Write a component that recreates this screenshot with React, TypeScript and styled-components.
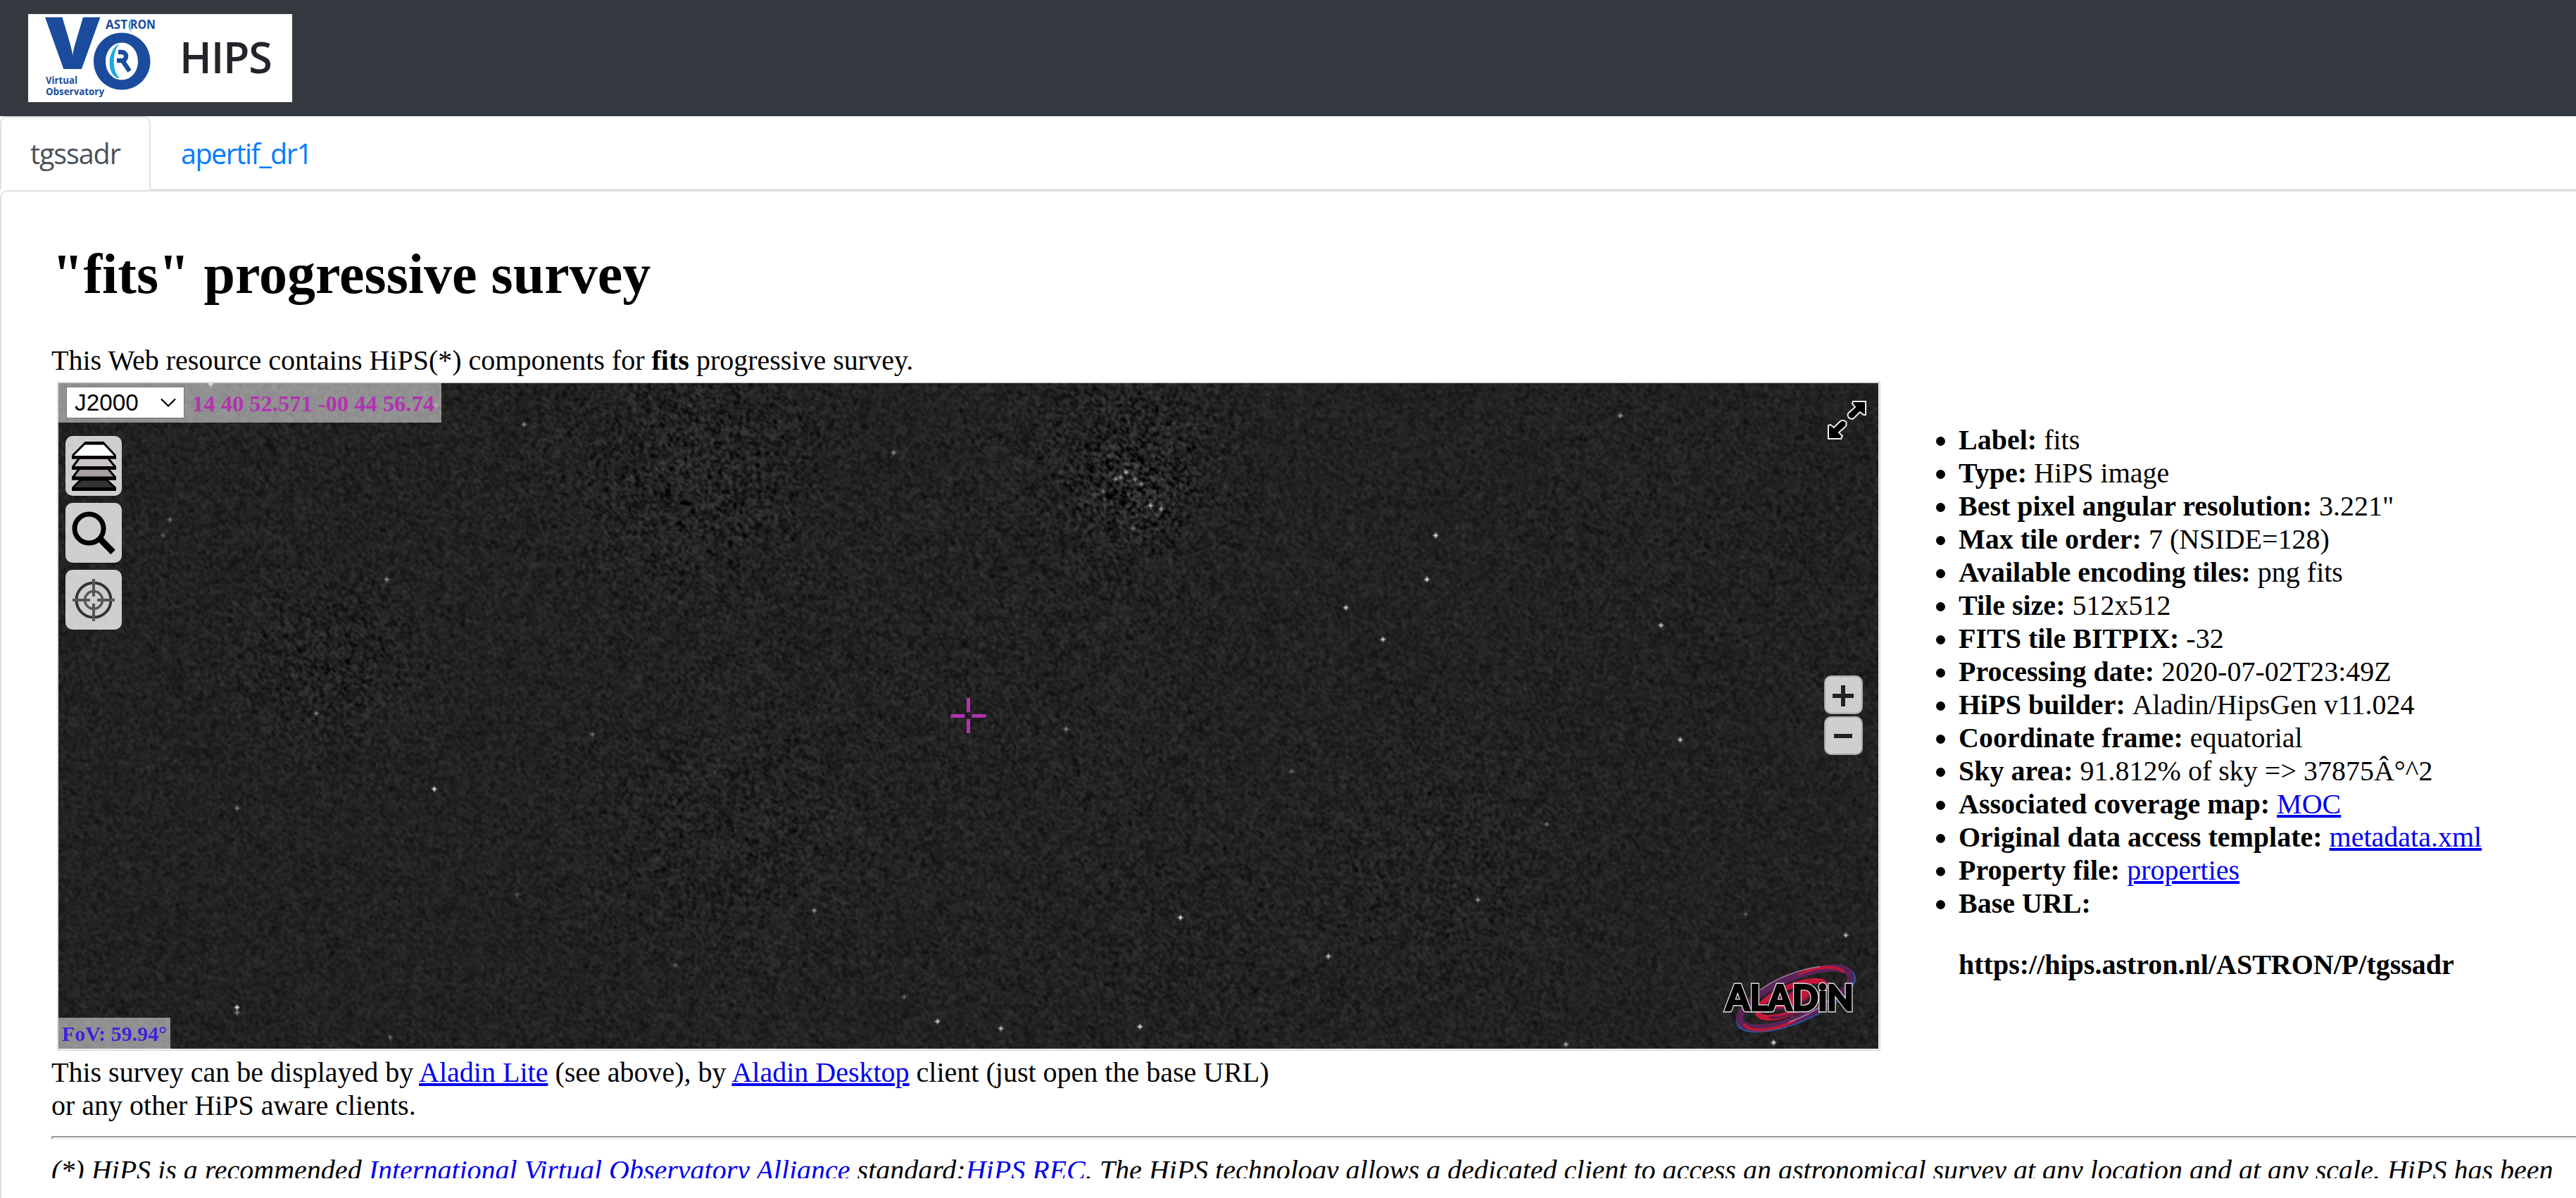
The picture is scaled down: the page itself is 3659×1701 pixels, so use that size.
import React, { useLayoutEffect, useRef } from 'react';
import styled, { createGlobalStyle } from 'styled-components';

const GlobalStyle = createGlobalStyle`
  html, body { margin: 0; padding: 0; background: #fff; overflow: hidden; }
  * { box-sizing: border-box; }
`;

const serif = "'Liberation Serif', 'Times New Roman', serif";
const sans = "'Open Sans', 'Noto Sans', sans-serif";

const Page = styled.div`
  height: 1701px;
  display: flex;
  flex-direction: column;
  overflow: hidden;
`;

const Navbar = styled.header`
  flex: none;
  height: 165px;
  padding: 20px 40px;
  background: #343a40;
  display: flex;
`;

const Brand = styled.div`
  width: 375px;
  height: 125px;
  background: #fff;
  display: flex;
  align-items: center;
`;

const BrandName = styled.span`
  margin-left: 10px;
  font: 600 61px/121px ${sans};
  height: 125px;
  letter-spacing: -1.2px;
  color: #212529;
`;

const Tabs = styled.nav`
  flex: none;
  height: 105px;
  display: flex;
  border-bottom: 2px solid #dee2e6;
`;

const Tab = styled.a<{ $active?: boolean }>`
  height: ${p => (p.$active ? 105 : 103)}px;
  width: ${p => (p.$active ? 214 : 260)}px;
  padding-left: ${p => (p.$active ? 41 : 41)}px;
  border: 2px solid transparent;
  border-color: ${p => (p.$active ? '#dee2e6 #dee2e6 #fff' : 'transparent')};
  border-radius: 10px 10px 0 0;
  background: #fff;
  color: ${p => (p.$active ? '#495057' : '#007bff')};
  font: 400 39.5px/103px ${sans};
  letter-spacing: ${p => (p.$active ? -1.1 : -1.5)}px;
  white-space: nowrap;
`;

const Card = styled.main`
  flex: 1;
  width: 3700px;
  border: 2px solid #dfdfdf;
  border-bottom: 0;
  border-radius: 10px 10px 0 0;
`;

const Frame = styled.div`
  width: 3657px;
  height: 1401px;
  padding: 71px 0 0 71px;
  overflow: hidden;
  font: 40px/47px ${serif};
  color: #000;
`;

const Title = styled.h1`
  margin: 0 0 53px;
  padding-left: 1px;
  font: 700 80px/92px ${serif};
`;

const Line = styled.p`
  margin: 0;
  white-space: nowrap;
`;

const Columns = styled.div`
  display: flex;
  margin: 7px 0 7px 8px;
  height: 950px;
`;

const Viewer = styled.section`
  position: relative;
  flex: none;
  width: 2590px;
  height: 950px;
  border: 2px solid #ddd;
`;

const Sky = styled.canvas`
  display: block;
  width: 2585px;
  height: 945px;
`;

const Location = styled.div`
  position: absolute;
  left: 0;
  top: 0;
  width: 544px;
  height: 56px;
  padding: 5px 0 0 11px;
  display: flex;
  background: rgba(255, 255, 255, 0.5);
`;

const Select = styled.div`
  width: 168px;
  height: 45px;
  padding: 0 11px;
  border: 1px solid #767676;
  background: #fff;
  display: flex;
  align-items: center;
  justify-content: space-between;
  font: 33.3px/43px 'Liberation Sans', Arial, sans-serif;
`;

const Coordinates = styled.span`
  margin-left: 11px;
  font: 700 32.5px/48px ${serif};
  color: #b232b2;
  white-space: nowrap;
`;

const ToolBar = styled.div`
  position: absolute;
  left: 10px;
  top: 75px;
  display: flex;
  flex-direction: column;
  gap: 10px;
`;

const Tool = styled.div`
  width: 80px;
  height: 85px;
  border-radius: 10px;
  background: rgba(250, 250, 250, 0.8);
`;

const ZoomBar = styled.div`
  position: absolute;
  left: 2508px;
  top: 415px;
  display: flex;
  flex-direction: column;
  gap: 3px;
`;

const ZoomButton = styled.div`
  width: 55px;
  height: 55px;
  border: 2px solid #a6a6a6;
  border-radius: 10px;
  background: rgba(250, 250, 250, 0.8);
`;

const Overlay = styled.svg<{ $x: number; $y: number }>`
  position: absolute;
  left: ${p => p.$x}px;
  top: ${p => p.$y}px;
`;

const Fov = styled.div`
  position: absolute;
  left: 0;
  top: 901px;
  width: 159px;
  height: 44px;
  padding-left: 5px;
  background: rgba(255, 255, 255, 0.5);
  font: 700 30px/45px ${serif};
  color: #3c22dc;
  white-space: nowrap;
`;

const Info = styled.div`
  padding: 59px 0 0 111px;
  white-space: nowrap;
`;

const Properties = styled.ul`
  margin: 0 0 40px;
  padding: 0;
  list-style: none;
`;

const Property = styled.li`
  display: flex;
  align-items: center;
  height: 47px;
  margin-left: -32px;
  white-space: pre;
  &::before {
    content: '';
    width: 13px;
    height: 13px;
    margin: 3px 19px 0 0;
    border-radius: 50%;
    background: #000;
  }
`;

const Link = styled.a<{ $plain?: boolean }>`
  color: #0000ee;
  text-decoration: ${p => (p.$plain ? 'none' : 'underline')};
  text-decoration-thickness: 3.500px;
`;

const Rule = styled.hr`
  width: 3700px;
  height: 5px;
  margin: 20px 0 20px;
  border: 2px solid;
  border-color: #9a9a9a #eee #eee #9a9a9a;
`;

const Note = styled(Line)`
  font-style: italic;
`;

const SKY_W = 1034;
const SKY_H = 378;

// [x, y, radius, strength] of the noisy patches, in sky pixels
const patches = [
  [612, 58, 24, 2.6], [606, 35, 55, 1.5], [368, 55, 55, 1.3], [155, 160, 45, 1.1],
  [380, 255, 80, 0.7], [790, 270, 70, 0.6], [560, 160, 130, 0.35], [330, 20, 100, 0.5],
  [650, 330, 90, 0.3], [130, 60, 110, 0.15], [920, 90, 120, 0.2],
];

// [x, y, brightness]
const stars = [
  [782, 86, 1], [777, 111, 1], [731, 127, 0.95], [752, 145, 0.9], [910, 137, 0.85], [887, 18, 0.6],
  [921, 202, 0.85], [213, 230, 1], [186, 111, 0.6], [637, 303, 1], [721, 325, 0.85], [499, 362, 0.9],
  [614, 365, 1], [535, 366, 0.8], [101, 354, 1], [101, 357, 0.5], [1015, 313, 0.8], [429, 299, 0.6],
  [572, 196, 0.5], [146, 187, 0.5], [101, 241, 0.45], [264, 23, 0.5], [303, 199, 0.4], [806, 293, 0.6],
  [188, 371, 0.4], [86, 0, 0.9], [474, 39, 0.5], [620, 69, 0.8], [626, 71, 0.6], [606, 50, 0.7],
  [63, 77, 0.4], [59, 86, 0.3], [214, 12, 0.4], [958, 301, 0.3], [985, 360, 0.4], [974, 374, 1],
  [856, 375, 0.7], [480, 348, 0.4], [700, 220, 0.35], [845, 250, 0.4], [350, 330, 0.3], [260, 290, 0.3],
  [600, 54, 0.55], [603, 53, 0.55], [611, 54, 0.55], [615, 57, 0.5], [610, 82, 0.4], [593, 61, 0.4],
];

function paintSky(canvas: HTMLCanvasElement) {
  const ctx = canvas.getContext('2d');
  if (!ctx) return;
  const image = ctx.createImageData(SKY_W, SKY_H);
  let seed = 20200702;
  const random = () => {
    seed = (Math.imul(seed, 1664525) + 1013904223) >>> 0;
    return seed / 4294967296;
  };
  const gauss = () => random() + random() + random() + random() - 2;
  const stride = SKY_W + 2;
  const field = new Float32Array(stride * (SKY_H + 2));
  for (let i = 0; i < field.length; i++) field[i] = gauss();
  for (let y = 0; y < SKY_H; y++) {
    for (let x = 0; x < SKY_W; x++) {
      let level = 1;
      for (const [px, py, r, s] of patches) {
        const d = ((x - px) ** 2 + (y - py) ** 2) / (r * r);
        level += s * Math.exp(-d);
      }
      const k = y * stride + x;
      const n = field[k] * 0.8 + (field[k + 1] + field[k + stride]) * 0.35 + field[k + stride + 1] * 0.45;
      let v = 34 + n * 9.5 * level;
      if (v > 46) v = 46 + (v - 46) * 0.75;
      const i = (y * SKY_W + x) * 4;
      image.data[i] = image.data[i + 1] = image.data[i + 2] = Math.max(0, v);
      image.data[i + 3] = 255;
    }
  }
  ctx.putImageData(image, 0, 0);
  for (const [x, y, b] of stars) {
    ctx.fillStyle = `rgba(255,255,255,${b})`;
    ctx.fillRect(x, y, 1, 1);
    ctx.fillStyle = `rgba(255,255,255,${b * 0.6})`;
    ctx.fillRect(x - 1, y, 1, 1);
    ctx.fillRect(x + 1, y, 1, 1);
    ctx.fillRect(x, y - 1, 1, 1);
    ctx.fillRect(x, y + 1, 1, 1);
  }
}

function SkyView() {
  const ref = useRef<HTMLCanvasElement>(null);
  useLayoutEffect(() => {
    if (ref.current) paintSky(ref.current);
  }, []);
  return <Sky ref={ref} width={SKY_W} height={SKY_H} />;
}

const VoLogo = () => (
  <svg width="205" height="125" viewBox="40 20 205 125" fill="#1a4b9c" fontFamily="'Open Sans', sans-serif" fontWeight="700">
    <text transform="translate(64 98) scale(1.17 1)" fontSize="102" fontWeight="800" textLength="67" lengthAdjust="spacingAndGlyphs">V</text>
    <path fillRule="evenodd" d="M173 46.500C195 46.500 213.500 64 213.500 87S195 127.500 173 127.500S133 110 133 87S151 46.500 173 46.500ZM173 60.500C160 60.500 150 72 150 87S160 113.500 173 113.500S196 102 196 87S186 60.500 173 60.500Z" />
    <path d="M170 62C153 69 150 104 167 111L170 111C159 101 159 73 170 62Z" fill="#1fa7e4" />
    <path d="M168 74H173C181 74 181 86 173 86H166M174 86L184 101" fill="none" stroke="#1a4b9c" strokeWidth="6.500" />
    <text x="150" y="41" fontSize="18.500" textLength="31" lengthAdjust="spacingAndGlyphs">AST</text>
    <path d="M187.500 26C181 31 181 41 187 45C184.500 39 184.500 32 187.500 26Z" fill="#1fa7e4" />
    <text x="185" y="41" fontSize="18.500" textLength="36" lengthAdjust="spacingAndGlyphs">RON</text>
    <text x="65" y="118.500" fontSize="14.500" textLength="45" lengthAdjust="spacingAndGlyphs">Virtual</text>
    <text x="65" y="135" fontSize="14.500" textLength="83" lengthAdjust="spacingAndGlyphs">Observatory</text>
  </svg>
);

const LayersIcon = () => (
  <svg width="80" height="85" viewBox="0 0 80 85" stroke="#000" strokeWidth="3">
    <path d="M22 62H58L70 73V76H11V73Z" fill="#333" />
    <path d="M9 75.500H72" strokeWidth="5" />
    <path d="M20 46H60L70 58V61H11V58Z" fill="#a6a0a0" />
    <path d="M9 60H72" strokeWidth="5" />
    <path d="M20 31H60L70 43V46H11V43Z" fill="#cbc5c5" />
    <path d="M9 45.500H72" strokeWidth="5" />
    <path d="M28 10H54L70 27V30H11V27Z" fill="#fff" />
    <path d="M27 10.200H55M9 30.500H72" strokeWidth="4.500" />
  </svg>
);

const SearchIcon = () => (
  <svg width="80" height="85" viewBox="0 0 80 85" fill="none" stroke="#000">
    <circle cx="33.500" cy="36.500" r="20.500" strokeWidth="7" />
    <path d="M49 51L67.500 70" strokeWidth="9" />
  </svg>
);

const TargetIcon = () => (
  <svg width="80" height="85" viewBox="0 0 80 85" fill="none" stroke="#333">
    <circle cx="40" cy="43" r="24.500" strokeWidth="4" />
    <circle cx="40" cy="43" r="12.500" strokeWidth="3.500" stroke="#555" />
    <path d="M40 13V38M40 48V73M10 43H35M45 43H70" strokeWidth="4" stroke="#555" />
  </svg>
);

const AladinLogo = () => (
  <svg width="200" height="105" viewBox="0 0 200 105">
    <g transform="rotate(-23 108 52)" fill="none">
      <ellipse cx="108" cy="54" rx="90" ry="32" stroke="#1b66b0" strokeWidth="2.500" />
      <ellipse cx="108" cy="52" rx="85" ry="29" stroke="#5b2458" strokeWidth="10" />
      <path d="M26 58C31 75 66 84 96 81M126 23C156 22 182 33 186 46" stroke="#c01838" strokeWidth="4" />
      <path d="M66 22C96 16 126 16 158 25" stroke="#a0809c" strokeWidth="1.500" />
      <path d="M86 80C116 82 141 77 156 72" stroke="#a0809c" strokeWidth="1.500" />
      <ellipse cx="103" cy="52" rx="52" ry="18" stroke="#c3183a" strokeWidth="8" />
      <ellipse cx="105" cy="52" rx="30" ry="9" fill="#c3183a" stroke="#701a48" strokeWidth="3" />
      <path d="M63 63C88 76 128 74 148 59" stroke="#701a48" strokeWidth="4" />
    </g>
    <g fontFamily="Lato, 'Open Sans', sans-serif" fontWeight="900" fontSize="52" strokeLinejoin="miter">
      <text x="9" y="70" textLength="182" lengthAdjust="spacingAndGlyphs" fill="#000" stroke="#ddd" strokeWidth="5">ALADiN</text>
      <text x="9" y="70" textLength="182" lengthAdjust="spacingAndGlyphs" fill="#000" stroke="#000" strokeWidth="2.200" aria-hidden="true">ALADiN</text>
    </g>
  </svg>
);

const properties: { label: string; value?: string; link?: boolean }[] = [
  { label: 'Label:', value: 'fits' },
  { label: 'Type:', value: 'HiPS image' },
  { label: 'Best pixel angular resolution:', value: '3.221"' },
  { label: 'Max tile order:', value: '7 (NSIDE=128)' },
  { label: 'Available encoding tiles:', value: 'png fits' },
  { label: 'Tile size:', value: '512x512' },
  { label: 'FITS tile BITPIX:', value: '-32' },
  { label: 'Processing date:', value: '2020-07-02T23:49Z' },
  { label: 'HiPS builder:', value: 'Aladin/HipsGen v11.024' },
  { label: 'Coordinate frame:', value: 'equatorial' },
  { label: 'Sky area:', value: '91.812% of sky => 37875Â°^2' },
  { label: 'Associated coverage map:', value: 'MOC', link: true },
  { label: 'Original data access template:', value: 'metadata.xml', link: true },
  { label: 'Property file:', value: 'properties', link: true },
  { label: 'Base URL:' },
];

export default function App() {
  return (
    <Page>
      <GlobalStyle />
      <Navbar>
        <Brand>
          <VoLogo />
          <BrandName>HIPS</BrandName>
        </Brand>
      </Navbar>
      <Tabs>
        <Tab $active>tgssadr</Tab>
        <Tab>apertif_dr1</Tab>
      </Tabs>
      <Card>
        <Frame>
          <Title>"fits" progressive survey</Title>
          <Line>
            This Web resource contains HiPS(*) components for <b>fits</b> progressive survey.
          </Line>
          <Columns>
            <Viewer>
              <SkyView />
              <Overlay $x={1267} $y={447} width="51" height="51" viewBox="0 0 51 51">
                <path d="M25.500 0V20M25.500 30V50M0.500 25.500H20.500M30.500 25.500H50.500" stroke="#b232b2" strokeWidth="5" />
              </Overlay>
              <Location>
                <Select>
                  J2000
                  <svg width="22" height="14" viewBox="0 0 22 14" fill="none" stroke="#000" strokeWidth="2.200">
                    <path d="M1 1.500L11 11.500L21 1.500" />
                  </svg>
                </Select>
                <Coordinates>14 40 52.571 -00 44 56.74</Coordinates>
              </Location>
              <ToolBar>
                <Tool><LayersIcon /></Tool>
                <Tool><SearchIcon /></Tool>
                <Tool><TargetIcon /></Tool>
              </ToolBar>
              <Overlay $x={2512} $y={24} width="58" height="58" viewBox="0 0 58 58" fill="#000" stroke="#eee" strokeWidth="2">
                <path d="M37 2H55V21L52 21L47 17L38 26Q34 28 31 25Q28 21 31 18L40 10L36 5Z" />
                <path d="M20 55H2V36L5 35L10 39L19 30Q23 27 27 31Q29 35 26 38L17 46L22 51Z" />
              </Overlay>
              <ZoomBar>
                <ZoomButton>
                  <svg width="51" height="51" viewBox="0 0 51 51">
                    <path d="M10 27H40M25 12V42" stroke="#222" strokeWidth="6" />
                  </svg>
                </ZoomButton>
                <ZoomButton>
                  <svg width="51" height="51" viewBox="0 0 51 51">
                    <path d="M12 26H38" stroke="#222" strokeWidth="6" />
                  </svg>
                </ZoomButton>
              </ZoomBar>
              <Overlay as="div" $x={2359} $y={821}>
                <AladinLogo />
              </Overlay>
              <Fov>FoV: 59.94°</Fov>
            </Viewer>
            <Info>
              <Properties>
                {properties.map(p => (
                  <Property key={p.label}>
                    <b>{p.label}{p.value && <>&nbsp;</>}</b>
                    {p.link ? <Link>{p.value}</Link> : p.value && <span>{p.value}</span>}
                  </Property>
                ))}
              </Properties>
              <b>https://hips.astron.nl/ASTRON/P/tgssadr</b>
            </Info>
          </Columns>
          <Line>
            This survey can be displayed by <Link>Aladin Lite</Link> (see above), by <Link>Aladin Desktop</Link> client
            (just open the base URL)
          </Line>
          <Line>or any other HiPS aware clients.</Line>
          <Rule />
          <Note>
            (*) HiPS is a recommended <Link $plain>International Virtual Observatory Alliance</Link> standard:
            <Link $plain>HiPS REC</Link>. The HiPS technology allows a dedicated client to access an astronomical survey
            at any location and at any scale. HiPS has been
          </Note>
        </Frame>
      </Card>
    </Page>
  );
}
